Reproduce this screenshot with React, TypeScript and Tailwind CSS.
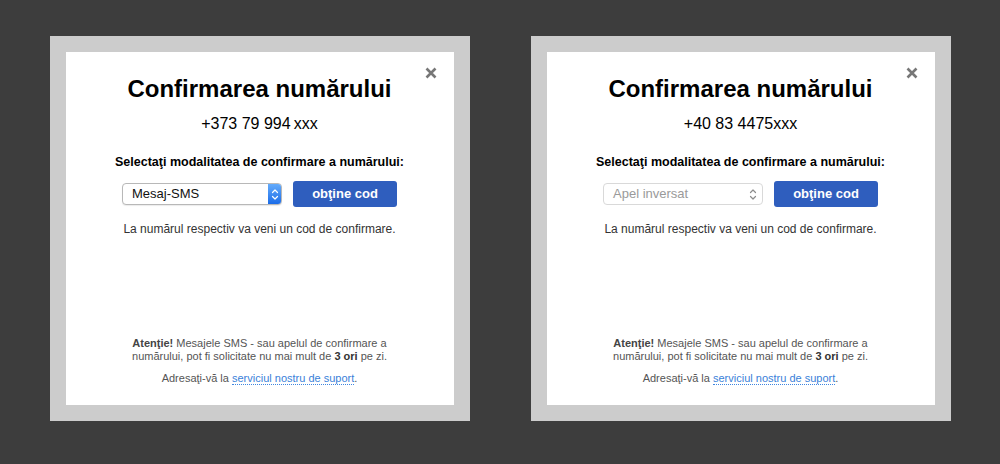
import React from 'react';

type Props = {
  phone: string;
  method: string;
  enabled: boolean;
};

function Chevrons({ color }: { color: string }) {
  return (
    <svg width="8" height="13" viewBox="0 0 8 13" fill="none">
      <path d="M1.5 4.5 L4 2 L6.5 4.5" stroke={color} strokeWidth="1.2" strokeLinecap="round" strokeLinejoin="round" />
      <path d="M1.5 8.5 L4 11 L6.5 8.5" stroke={color} strokeWidth="1.2" strokeLinecap="round" strokeLinejoin="round" />
    </svg>
  );
}

function MethodSelect({ method, enabled }: { method: string; enabled: boolean }) {
  if (enabled) {
    return (
      <div className="flex h-[22px] w-[160px] items-stretch rounded-[4px] border border-[#b8b8b8] bg-white shadow-[0_1px_1px_rgba(0,0,0,0.08)]">
        <div className="flex flex-1 items-center pl-[9px] text-[13px] text-[#111]">{method}</div>
        <div className="flex w-[13px] items-center justify-center rounded-r-[3px] bg-gradient-to-b from-[#63abfb] to-[#1a6ce8]">
          <Chevrons color="#ffffff" />
        </div>
      </div>
    );
  }
  return (
    <div className="flex h-[22px] w-[160px] items-center rounded-[4px] border border-[#d9d9d9] bg-white">
      <div className="flex-1 pl-[9px] text-[13px] text-[#9a9a9a]">{method}</div>
      <div className="flex w-[16px] items-center justify-center pr-[3px]">
        <Chevrons color="#8c8c8c" />
      </div>
    </div>
  );
}

function ConfirmPanel({ phone, method, enabled }: Props) {
  return (
    <div className="w-[420px] bg-[#cccccc] p-4">
      <div className="relative flex h-[353px] flex-col items-center bg-white pt-[23px] pb-[20px]">
        <svg className="absolute right-[17px] top-[15px]" width="12" height="12" viewBox="0 0 12 12">
          <path d="M1.5 1.5 L10.5 10.5 M10.5 1.5 L1.5 10.5" stroke="#777777" strokeWidth="2.6" />
        </svg>

        <h1 className="text-[24px] font-bold leading-[28px] text-black">Confirmarea numărului</h1>
        <div className="mt-[11px] text-[16px] leading-[20px] text-black">{phone}</div>

        <div className="mt-[20px] text-[12.5px] font-bold leading-[16px] text-black">
          Selectaţi modalitatea de confirmare a numărului:
        </div>

        <div className="mt-[11px] flex items-center gap-[11px]">
          <MethodSelect method={method} enabled={enabled} />
          <button className="h-[26px] w-[104px] rounded-[3px] bg-[#2f5ebe] text-[13px] font-bold text-white">
            obţine cod
          </button>
        </div>

        <div className="mt-[14px] text-[12px] leading-[16px] text-[#333333]">
          La numărul respectiv va veni un cod de confirmare.
        </div>

        <div className="mt-auto flex flex-col items-center text-center text-[11px] leading-[13px] text-[#555555]">
          <p>
            <b className="text-[#444444]">Atenţie!</b> Mesajele SMS - sau apelul de confirmare a
            <br />
            numărului, pot fi solicitate nu mai mult de <b className="text-[#333333]">3 ori</b> pe zi.
          </p>
          <p className="mt-[9px]">
            Adresaţi-vă la{' '}
            <a className="border-b border-dotted border-[#3f86e0] text-[#3a7fd9]" href="#">
              serviciul nostru de suport
            </a>
            .
          </p>
        </div>
      </div>
    </div>
  );
}

export default function App() {
  return (
    <div
      className="flex h-[464px] items-start justify-center gap-[61px] bg-[#3d3d3d] pt-[36px]"
      style={{ fontFamily: '"Liberation Sans", Arial, sans-serif' }}
    >
      <ConfirmPanel phone={'+373 79 994\u2009xxx'} method="Mesaj-SMS" enabled />
      <ConfirmPanel phone="+40 83 4475xxx" method="Apel inversat" enabled={false} />
    </div>
  );
}
